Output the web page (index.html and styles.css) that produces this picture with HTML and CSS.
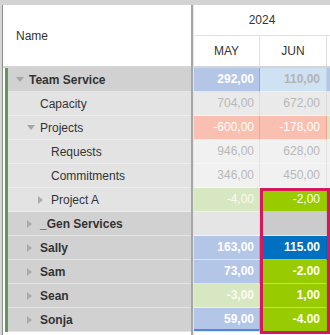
FILE: index.html
```html
<!DOCTYPE html>
<html>
<head>
<meta charset="UTF-8">
<title>Planning grid</title>
<link rel="stylesheet" href="styles.css">
</head>
<body>
<div class="grid">
	<div class="names">
		<div class="head-name">Name</div>
		<div class="tree">
			<div class="row dark bold lvl0"><span class="caret down"></span>Team Service</div>
			<div class="row lvl1"><span class="caret"></span>Capacity</div>
			<div class="row lvl1"><span class="caret down"></span>Projects</div>
			<div class="row lvl2"><span class="caret"></span>Requests</div>
			<div class="row lvl2"><span class="caret"></span>Commitments</div>
			<div class="row lvl2"><span class="caret right"></span>Project A</div>
			<div class="row dark bold lvl1"><span class="caret right"></span>_Gen Services</div>
			<div class="row dark bold lvl1"><span class="caret right"></span>Sally</div>
			<div class="row dark bold lvl1"><span class="caret right"></span>Sam</div>
			<div class="row dark bold lvl1"><span class="caret right"></span>Sean</div>
			<div class="row dark bold lvl1"><span class="caret right"></span>Sonja</div>
		</div>
	</div>
	<div class="data">
		<div class="head">
			<div class="year">2024</div>
			<div class="months">
				<div class="mon">MAY</div>
				<div class="mon">JUN</div>
				<div class="mon"></div>
			</div>
		</div>
		<div class="drow bold">
			<div class="cell blue">292,00</div>
			<div class="cell pale-blue">110,00</div>
			<div class="cell blue"></div>
		</div>
		<div class="drow">
			<div class="cell grey">704,00</div>
			<div class="cell grey">672,00</div>
			<div class="cell grey"></div>
		</div>
		<div class="drow">
			<div class="cell salmon">-600,00</div>
			<div class="cell salmon">-178,00</div>
			<div class="cell pale-green"></div>
		</div>
		<div class="drow">
			<div class="cell light">946,00</div>
			<div class="cell light">628,00</div>
			<div class="cell light"></div>
		</div>
		<div class="drow">
			<div class="cell light">346,00</div>
			<div class="cell light">450,00</div>
			<div class="cell light"></div>
		</div>
		<div class="drow">
			<div class="cell pale-green">-4,00</div>
			<div class="cell green">-2,00</div>
			<div class="cell pale-green"></div>
		</div>
		<div class="drow">
			<div class="cell empty"></div>
			<div class="cell empty-dark"></div>
			<div class="cell empty"></div>
		</div>
		<div class="drow bold">
			<div class="cell blue">163,00</div>
			<div class="cell strong-blue">115.00</div>
			<div class="cell blue"></div>
		</div>
		<div class="drow bold">
			<div class="cell blue">73,00</div>
			<div class="cell green">-2.00</div>
			<div class="cell blue"></div>
		</div>
		<div class="drow bold">
			<div class="cell pale-green">-3,00</div>
			<div class="cell green">1,00</div>
			<div class="cell pale-green"></div>
		</div>
		<div class="drow bold">
			<div class="cell blue focus">59,00</div>
			<div class="cell green">-4.00</div>
			<div class="cell blue"></div>
		</div>
	</div>
	<div class="selection"></div>
</div>
</body>
</html>
```

FILE: styles.css
```css
*{
	margin: 0;
	padding: 0;
	box-sizing: border-box;
}
body {
	width: 330px;
	height: 335px;
	overflow: hidden;
	background: #fff;
	font-family: "Liberation Sans", Arial, sans-serif;
	font-size: 12px;
	color: #333;
}
.grid {
	position: relative;
	display: flex;
	height: 335px;
	overflow: hidden;
	border-top: 5px solid #d3d3d3;
	border-left: 2px solid #d6d6d6;
}

/* name column */
.names {
	width: 191px;
	flex: none;
	border-left: 1px solid #8f8f8f;
	border-right: 2px solid #a6a6a6;
}
.head-name {
	height: 63px;
	display: flex;
	align-items: center;
	padding-left: 13px;
	border-bottom: 2px solid #d4d4d4;
}
.tree {
	margin-left: 2px;
	border-left: 3px solid #5c9a58;
}
.row {
	height: 24px;
	display: flex;
	align-items: center;
	background: #e3e3e3;
	border-bottom: 1px solid #ededed;
	white-space: nowrap;
}
.row.dark {
	background: #d1d1d1;
	border-bottom-color: #e4e4e4;
}
.bold {
	font-weight: bold;
}
.lvl0 { padding-left: 8px; }
.lvl1 { padding-left: 19px; }
.lvl2 { padding-left: 30px; }
.caret {
	width: 13px;
	flex: none;
	display: flex;
	align-items: center;
}
.caret.down:before {
	content: '';
	border-left: 4px solid transparent;
	border-right: 4px solid transparent;
	border-top: 5px solid #a6a6a6;
}
.caret.right:before {
	content: '';
	border-top: 4px solid transparent;
	border-bottom: 4px solid transparent;
	border-left: 5px solid #ababab;
}

/* value columns */
.data {
	flex: 1;
	min-width: 0;
	overflow: hidden;
	border-left: 1px solid #e6e6e6;
}
.head {
	height: 63px;
	border-bottom: 2px solid #d4d4d4;
}
.year {
	height: 31px;
	line-height: 30px;
	text-align: center;
	border-bottom: 1px solid #e0e0e0;
}
.months {
	display: flex;
	height: 30px;
}
.mon {
	width: 66px;
	flex: none;
	line-height: 30px;
	text-align: center;
	border-right: 1px solid #e0e0e0;
}
.mon:nth-child(2) { width: 67px; }
.mon:last-child { flex: 1; width: auto; min-width: 0; border: none; }

.drow {
	display: flex;
	height: 24px;
}
.cell {
	width: 66px;
	flex: none;
	line-height: 23px;
	text-align: right;
	padding-right: 5px;
	color: #fff;
	border-right: 1px solid rgba(0,0,0,0.06);
	border-bottom: 1px solid rgba(255,255,255,0.55);
}
.cell:nth-child(2) {
	width: 67px;
	padding-right: 6px;
}
.cell:last-child {
	flex: 1;
	width: auto;
	min-width: 0;
	padding-right: 0;
	border-right: none;
}
.blue { background: #b4c6e7; border-right-color: #8ea9dc; }
.pale-blue { background: #cfe2f3; color: #b3b3b3; }
.grey { background: #eaeaea; color: #b8b8b8; border-bottom-color: #f2f2f2; }
.light { background: #f1f1f1; color: #b8b8b8; border-bottom-color: #f7f7f7; }
.salmon { background: #f9bfb0; border-right-color: #f3a28d; }
.pale-green { background: #d6e7c1; color: #fbfbef; }
.green { background: #99cc00; color: #fffff2; border-bottom-color: #c2e066; }
.strong-blue { background: #0070c0; }
.empty { background: #e5e5e5; }
.empty-dark { background: #cbcbcb; }
.focus { box-shadow: inset 0 -2px 0 #4f86d8; }

/* highlighted range */
.selection {
	position: absolute;
	left: 258px;
	top: 183px;
	width: 70px;
	height: 146px;
	border: 3px solid #d6175c;
}
```
